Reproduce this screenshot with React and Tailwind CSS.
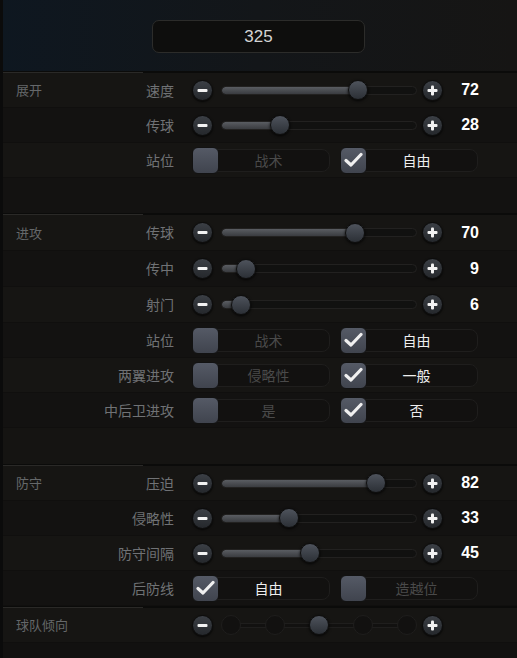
import React from 'react';

const cjk = { fontFamily: '"Noto Sans CJK SC", "Noto Sans", sans-serif' };
const num = { fontFamily: '"Liberation Sans", Arial, sans-serif' };

function RoundButton({ plus }) {
  return (
    <div className="w-[21px] h-[21px] rounded-full bg-gradient-to-b from-[#3b3f45] to-[#25282c] border border-[#0c0c0c] shadow-[0_1px_2px_rgba(0,0,0,0.8)] flex items-center justify-center shrink-0">
      <svg width="11" height="11" viewBox="0 0 11 11">
        <rect x="0.5" y="4" width="10" height="3" rx="1" fill="#f2f2f2" />
        {plus && <rect x="4" y="0.5" width="3" height="10" rx="1" fill="#f2f2f2" />}
      </svg>
    </div>
  );
}

function Slider({ value }) {
  const pos = 9 + (value / 100) * 178;
  return (
    <div className="relative w-[196px] h-[20px] flex items-center shrink-0">
      <div className="w-full h-[9px] rounded-full bg-[#111110] border border-[#222120] overflow-hidden">
        <div
          className="h-full rounded-full bg-gradient-to-b from-[#5a5d62] to-[#3a3c40]"
          style={{ width: pos + 'px' }}
        />
      </div>
      <div
        className="absolute top-[0px] w-[20px] h-[20px] rounded-full bg-gradient-to-b from-[#4e535c] to-[#2c3036] border border-[#0e0e0e] shadow-[0_1px_3px_rgba(0,0,0,0.9)]"
        style={{ left: pos - 10 + 'px' }}
      />
    </div>
  );
}

function StepSlider() {
  const steps = [0, 1, 2, 3, 4];
  return (
    <div className="relative w-[196px] h-[22px] flex items-center shrink-0">
      <div className="absolute left-[9px] right-[9px] h-[5px] border-y border-[#1f1e1d] bg-[#121110]" />
      <div className="relative w-full flex justify-between">
        {steps.map((s) =>
          s === 2 ? (
            <div key={s} className="w-[20px] h-[20px] rounded-full bg-gradient-to-b from-[#4e535c] to-[#2c3036] border border-[#0e0e0e] shadow-[0_1px_3px_rgba(0,0,0,0.9)]" />
          ) : (
            <div key={s} className="w-[20px] h-[20px] rounded-full bg-[#121110] border border-[#1f1e1d]" />
          )
        )}
      </div>
    </div>
  );
}

function Check({ on }) {
  return (
    <div className="w-[27px] h-[27px] rounded-[6px] bg-gradient-to-b from-[#555a66] to-[#40444e] border border-[#121212] flex items-center justify-center shrink-0 z-10">
      {on && (
        <svg width="19" height="16" viewBox="0 0 19 16">
          <path d="M2 8.5 L7 13 L17 2.5" fill="none" stroke="#f0f0f0" strokeWidth="3.2" strokeLinecap="round" strokeLinejoin="round" />
        </svg>
      )}
    </div>
  );
}

function Option({ label, on }) {
  return (
    <div className="flex items-center w-[138px] shrink-0">
      <Check on={on} />
      <div
        className={
          'flex-1 -ml-[6px] h-[23px] rounded-r-[8px] border border-[#1f1e1d] bg-[#121110] flex items-center justify-center text-[14px] pr-[6px] ' +
          (on ? 'text-[#eeeeee]' : 'text-[#4a4a4a]')
        }
        style={cjk}
      >
        {label}
      </div>
    </div>
  );
}

function Row({ section, label, h, children, dark }) {
  return (
    <div className={'flex items-center border-b border-[#100f0e] ' + h + ' ' + (dark ? 'bg-[#131211]' : 'bg-[#161513]')}>
      <div className="w-[171px] flex items-center justify-between pl-[13px] shrink-0" style={cjk}>
        <span className="text-[13px] text-[#65686a]">{section}</span>
        <span className="text-[14px] text-[#707275]">{label}</span>
      </div>
      <div className="ml-[18px] flex items-center">{children}</div>
    </div>
  );
}

function SliderRow({ section, label, value, h, dark }) {
  return (
    <Row section={section} label={label} h={h} dark={dark}>
      <RoundButton />
      <div className="ml-[8px]">
        <Slider value={value} />
      </div>
      <div className="ml-[5px]">
        <RoundButton plus />
      </div>
      <div className="w-[36px] text-right text-[16px] font-bold text-white" style={num}>
        {value}
      </div>
    </Row>
  );
}

function OptionRow({ label, a, b, first, h, dark }) {
  return (
    <Row label={label} h={h} dark={dark}>
      <Option label={a} on={first} />
      <div className="ml-[10px]">
        <Option label={b} on={!first} />
      </div>
    </Row>
  );
}

function Divider() {
  return (
    <div className="relative h-[2px] bg-[#0b0b0a]">
      <div className="absolute left-0 top-[1px] w-[140px] h-[1px] bg-[#2a2927]" />
    </div>
  );
}

export default function App() {
  return (
    <div className="w-[517px] h-[658px] bg-[#151412] overflow-hidden border-l-[3px] border-[#0b0b0b]">
      <div className="h-[71px] bg-gradient-to-r from-[#0e1720] via-[#131619] to-[#161514] flex items-start justify-center pt-[20px] -ml-[3px]">
        <div className="w-[213px] h-[33px] rounded-[7px] bg-[#0e0e0d] border border-[#2c2c2a] flex items-center justify-center text-[17px] text-[#d4d4d4]" style={num}>
          325
        </div>
      </div>
      <Divider />

      <SliderRow section="展开" label="速度" value={72} h="h-[35px]" />
      <SliderRow label="传球" value={28} h="h-[35px]" dark />
      <OptionRow label="站位" a="战术" b="自由" h="h-[35px]" />
      <div className="h-[35px] bg-[#131211]" />
      <Divider />

      <SliderRow section="进攻" label="传球" value={70} h="h-[36px]" />
      <SliderRow label="传中" value={9} h="h-[36px]" dark />
      <SliderRow label="射门" value={6} h="h-[36px]" />
      <OptionRow label="站位" a="战术" b="自由" h="h-[35px]" dark />
      <OptionRow label="两翼进攻" a="侵略性" b="一般" h="h-[35px]" />
      <OptionRow label="中后卫进攻" a="是" b="否" h="h-[35px]" dark />
      <div className="h-[36px] bg-[#151412]" />
      <Divider />

      <SliderRow section="防守" label="压迫" value={82} h="h-[35px]" />
      <SliderRow label="侵略性" value={33} h="h-[35px]" dark />
      <SliderRow label="防守间隔" value={45} h="h-[35px]" />
      <OptionRow label="后防线" a="自由" b="造越位" first h="h-[35px]" dark />
      <Divider />

      <Row section="球队倾向" label="" h="h-[35px]">
        <RoundButton />
        <div className="ml-[8px]">
          <StepSlider />
        </div>
        <div className="ml-[5px]">
          <RoundButton plus />
        </div>
      </Row>
      <div className="h-[20px] bg-[#121110]" />
    </div>
  );
}
